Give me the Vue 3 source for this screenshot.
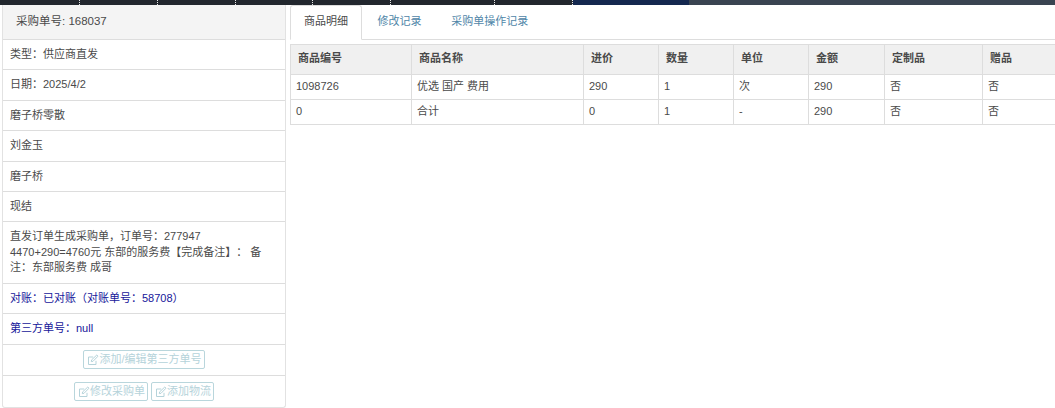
<script setup>
const segments = [
  { w: 80 }, { w: 78 }, { w: 78 }, { w: 77 }, { w: 78 }, { w: 104 }, { w: 78 },
  { w: 116, kind: 'navy' }, { w: 366, kind: 'slate' }
]
const columns = [121, 172, 75, 75, 75, 76, 98, 73]
const headers = ['商品编号', '商品名称', '进价', '数量', '单位', '金额', '定制品', '赠品']
const rows = [
  ['1098726', '优选 国产 费用', '290', '1', '次', '290', '否', '否'],
  ['0', '合计', '0', '1', '-', '290', '否', '否']
]
</script>

<template>
  <div class="page">
    <div class="topbar">
      <div
        v-for="(s, i) in segments"
        :key="i"
        class="seg"
        :class="s.kind"
        :style="{ width: s.w + 'px' }"
      ></div>
    </div>
    <div class="main">
      <aside class="panel">
        <div class="panel-head">采购单号: 168037</div>
        <div class="item">类型：供应商直发</div>
        <div class="item">日期：2025/4/2</div>
        <div class="item">磨子桥零散</div>
        <div class="item">刘金玉</div>
        <div class="item">磨子桥</div>
        <div class="item">现结</div>
        <div class="item">直发订单生成采购单，订单号：277947<br />4470+290=4760元 东部的服务费【完成备注】： 备注：东部服务费 成哥</div>
        <div class="item blue">对账：已对账（对账单号：58708）</div>
        <div class="item blue third">第三方单号：null</div>
        <div class="item actions">
          <button class="btn" disabled>
            <svg class="ico" viewBox="0 0 12 12"><path d="M9 6.8V10.5H1.5V3H6.2" /><path d="M4.6 5.9L9.8 1L11 2.2L6 7.3L4.3 7.6Z" /></svg>添加/编辑第三方单号
          </button>
        </div>
        <div class="item actions last">
          <button class="btn" disabled>
            <svg class="ico" viewBox="0 0 12 12"><path d="M9 6.8V10.5H1.5V3H6.2" /><path d="M4.6 5.9L9.8 1L11 2.2L6 7.3L4.3 7.6Z" /></svg>修改采购单
          </button>
          <button class="btn" disabled>
            <svg class="ico" viewBox="0 0 12 12"><path d="M9 6.8V10.5H1.5V3H6.2" /><path d="M4.6 5.9L9.8 1L11 2.2L6 7.3L4.3 7.6Z" /></svg>添加物流
          </button>
        </div>
      </aside>
      <section class="content">
        <nav class="tabs">
          <a class="tab active">商品明细</a>
          <a class="tab">修改记录</a>
          <a class="tab">采购单操作记录</a>
        </nav>
        <table class="grid">
          <colgroup>
            <col v-for="(c, i) in columns" :key="i" :style="{ width: c + 'px' }" />
          </colgroup>
          <thead>
            <tr><th v-for="h in headers" :key="h">{{ h }}</th></tr>
          </thead>
          <tbody>
            <tr v-for="(r, i) in rows" :key="i">
              <td v-for="(c, j) in r" :key="j">{{ c }}</td>
            </tr>
          </tbody>
        </table>
      </section>
    </div>
  </div>
</template>

<style>
html, body { margin: 0; background: #fff; overflow: hidden; }
</style>

<style scoped>
* { box-sizing: border-box; }
.page {
  width: 1055px;
  height: 408px;
  overflow: hidden;
  font-family: "Liberation Sans", "Noto Sans CJK SC", sans-serif;
  font-size: 11px;
  line-height: 15.4px;
  text-spacing-trim: space-all;
  color: #4a4a4a;
  background: #fff;
}
.topbar { display: flex; height: 5px; }
.seg { background: #22272e; border-right: 1px dotted #e8e8e8; }
.seg.navy { background: #14284f; border-right: none; }
.seg.slate { background: #3a4451; border-right: none; }
.main { display: flex; align-items: flex-start; }
.panel {
  width: 284px;
  margin-left: 2px;
  border: 1px solid #e2e2e2;
  border-top: none;
  border-radius: 0 0 3px 3px;
  flex: none;
}
.panel-head {
  height: 35px;
  padding: 9px 13px;
  background: #f4f4f4;
  border-bottom: 1px solid #ddd;
  font-size: 11.5px;
}
.item {
  padding: 7px;
  border-bottom: 1px solid #ddd;
}
.item.blue { color: #16169a; }
.item.third { padding-bottom: 8px; }
.item.actions {
  display: flex;
  justify-content: center;
  gap: 3px;
  padding: 5px 0 0;
  height: 31px;
}
.item.last { border-bottom: none; padding-top: 6px; height: 31px; }
.btn {
  display: flex;
  align-items: center;
  height: 19px;
  padding: 0 2px 0 3px;
  border: 1px solid #b9d6dc;
  border-radius: 2px;
  background: #fff;
  color: #b5d3da;
  font: inherit;
  line-height: 15px;
}
.ico {
  width: 12px;
  height: 12px;
  fill: none;
  stroke: #b5d3da;
  stroke-width: 1;
  flex: none;
}
.content { flex: 1; margin-left: 4px; min-width: 0; }
.tabs {
  display: flex;
  height: 35px;
  border-bottom: 1px solid #ddd;
}
.tab {
  height: 35px;
  padding: 8px 13px;
  margin-right: 1.6px;
  color: #4f86a8;
  border: 1px solid transparent;
}
.tab.active {
  color: #4a4a4a;
  background: #fff;
  border-color: #ddd #ddd #fff;
  border-radius: 3px 3px 0 0;
}
.grid {
  width: 765px;
  margin-top: 4px;
  table-layout: fixed;
  border-collapse: collapse;
}
.grid th, .grid td {
  border: 1px solid #ddd;
  text-align: left;
  font-weight: normal;
}
.grid tr > :last-child { border-right: none; }
.grid th {
  height: 30px;
  padding: 0 7px 1px;
  background: #f0f0f0;
  font-weight: bold;
  color: #4a4a4a;
}
.grid td {
  height: 25px;
  padding: 0 5px 1px;
}
</style>
